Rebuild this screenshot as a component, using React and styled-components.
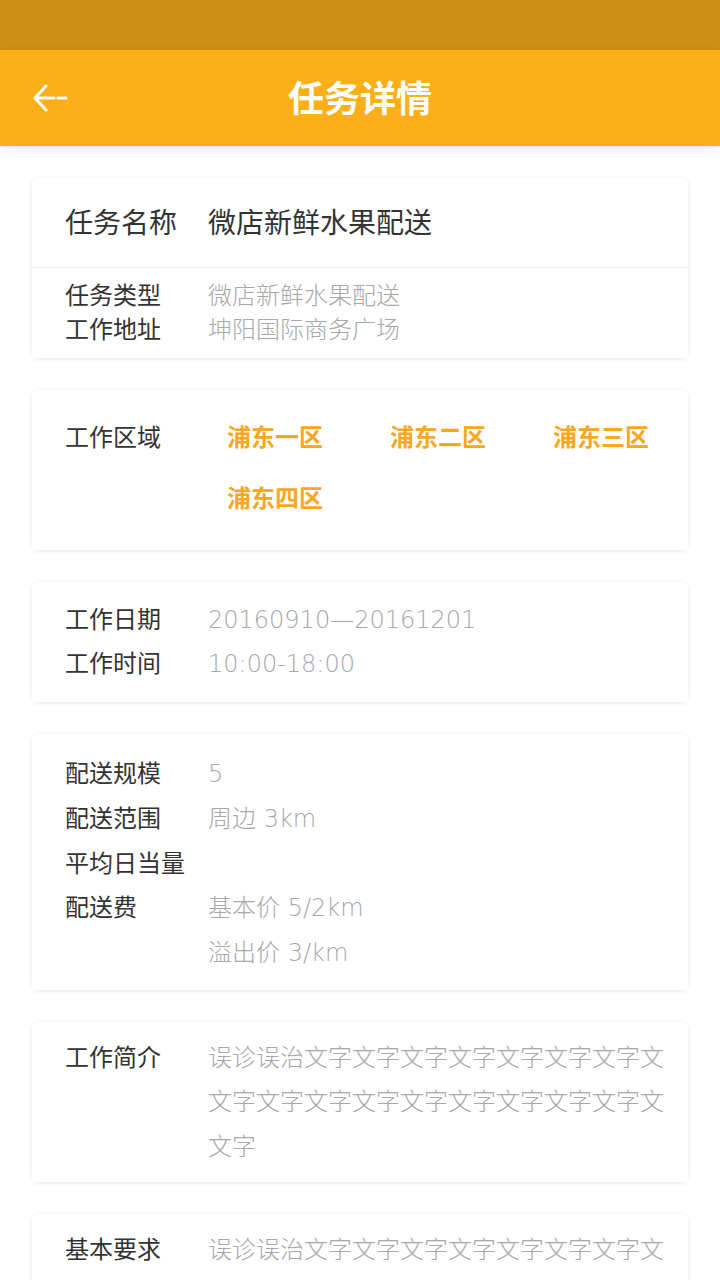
import React from "react";
import styled, { createGlobalStyle } from "styled-components";

const Global = createGlobalStyle`
  html, body { margin: 0; padding: 0; background: #ffffff; }
  body { font-family: "Noto Sans CJK SC", "Noto Sans", sans-serif; }
  * { box-sizing: border-box; }
`;

const Page = styled.div`
  width: 720px;
  min-height: 1280px;
  background: #ffffff;
`;

const StatusBar = styled.div`
  height: 50px;
  background: #cf8f15;
`;

const Header = styled.header`
  height: 96px;
  background: #fdaf19;
  display: flex;
  align-items: center;
  justify-content: center;
  position: relative;
  box-shadow: 0 4px 12px rgba(0, 0, 0, 0.08);
  z-index: 1;
`;

const BackButton = styled.button`
  position: absolute;
  left: 28px;
  top: 50%;
  transform: translateY(-50%);
  width: 44px;
  height: 44px;
  padding: 0;
  border: none;
  background: transparent;
  display: flex;
  align-items: center;
  justify-content: center;
`;

const Title = styled.h1`
  margin: 0 0 4px;
  color: #ffffff;
  font-size: 36px;
  font-weight: 700;
  line-height: 1;
`;

const Content = styled.main`
  display: flex;
  flex-direction: column;
  gap: 32px;
  padding: 32px 32px 40px;
`;

const Card = styled.section`
  background: #ffffff;
  border-radius: 6px;
  box-shadow: 0 1px 5px rgba(0, 0, 0, 0.1);
  padding: ${(p) => p.$pad || "15px 20px 17px 33px"};
`;

const SplitCard = styled.section`
  background: #ffffff;
  border-radius: 6px;
  box-shadow: 0 1px 5px rgba(0, 0, 0, 0.1);
`;

const TitleRow = styled.div`
  height: 90px;
  display: grid;
  grid-template-columns: 143px 1fr;
  align-items: center;
  padding: 0 20px 4px 33px;
  border-bottom: 1px solid #efefef;
  font-size: 28px;
  color: #333333;
`;

const SubBlock = styled.div`
  padding: 9px 20px 13px 33px;
`;

const Row = styled.div`
  display: grid;
  grid-template-columns: 143px 1fr;
  font-size: 24px;
  line-height: ${(p) => p.$lh || "44.5px"};
`;

const Label = styled.div`
  color: #333333;
  white-space: nowrap;
`;

const Value = styled.div`
  padding-top: 2px;
  margin-bottom: -2px;
  color: #a8a8a8;
  word-break: break-all;
  font-family: "DejaVu Sans", "Noto Sans CJK SC", sans-serif;
  font-weight: 300;
`;

const Tags = styled.div`
  display: grid;
  grid-template-columns: repeat(3, 163px);
  row-gap: 17px;
`;

const Tag = styled.span`
  padding-left: 19px;
  color: #f8a71e;
  font-weight: 700;
  font-size: 24px;
  line-height: 44px;
`;

const BackIcon = () => (
  <svg width="36" height="30" viewBox="0 0 36 30" fill="none">
    <path
      d="M14 3 L3 15 L14 27 M3 15 H22 M26 15 H34"
      stroke="#ffffff"
      strokeWidth="3"
      strokeLinecap="round"
      strokeLinejoin="round"
    />
  </svg>
);

const intro =
  "误诊误治" + "文字".repeat(7) + "文" + "文字".repeat(9) + "文" + "文字";

export default function App() {
  return (
    <Page>
      <Global />
      <StatusBar />
      <Header>
        <BackButton aria-label="返回">
          <BackIcon />
        </BackButton>
        <Title>任务详情</Title>
      </Header>
      <Content>
        <SplitCard>
          <TitleRow>
            <span>任务名称</span>
            <span>微店新鲜水果配送</span>
          </TitleRow>
          <SubBlock>
            <Row $lh="34px">
              <Label>任务类型</Label>
              <Value>微店新鲜水果配送</Value>
            </Row>
            <Row $lh="34px">
              <Label>工作地址</Label>
              <Value>坤阳国际商务广场</Value>
            </Row>
          </SubBlock>
        </SplitCard>

        <Card $pad="24px 20px 31px 33px">
          <Row $lh="44px">
            <Label>工作区域</Label>
            <Tags>
              <Tag>浦东一区</Tag>
              <Tag>浦东二区</Tag>
              <Tag>浦东三区</Tag>
              <Tag>浦东四区</Tag>
            </Tags>
          </Row>
        </Card>

        <Card $pad="14px 20px 18px 33px">
          <Row $lh="44px">
            <Label>工作日期</Label>
            <Value>20160910—20161201</Value>
          </Row>
          <Row $lh="44px">
            <Label>工作时间</Label>
            <Value>10:00-18:00</Value>
          </Row>
        </Card>

        <Card $pad="16px 20px 16px 33px">
          <Row $lh="44.8px">
            <Label>配送规模</Label>
            <Value>5</Value>
          </Row>
          <Row $lh="44.8px">
            <Label>配送范围</Label>
            <Value>周边 3km</Value>
          </Row>
          <Row $lh="44.8px">
            <Label>平均日当量</Label>
            <Value />
          </Row>
          <Row $lh="44.8px">
            <Label>配送费</Label>
            <Value>
              基本价 5/2km
              <br />
              溢出价 3/km
            </Value>
          </Row>
        </Card>

        <Card $pad="12px 20px 15px 33px">
          <Row>
            <Label>工作简介</Label>
            <Value>{intro}</Value>
          </Row>
        </Card>

        <Card $pad="12px 20px 15px 33px">
          <Row>
            <Label>基本要求</Label>
            <Value>{intro}</Value>
          </Row>
        </Card>
      </Content>
    </Page>
  );
}
